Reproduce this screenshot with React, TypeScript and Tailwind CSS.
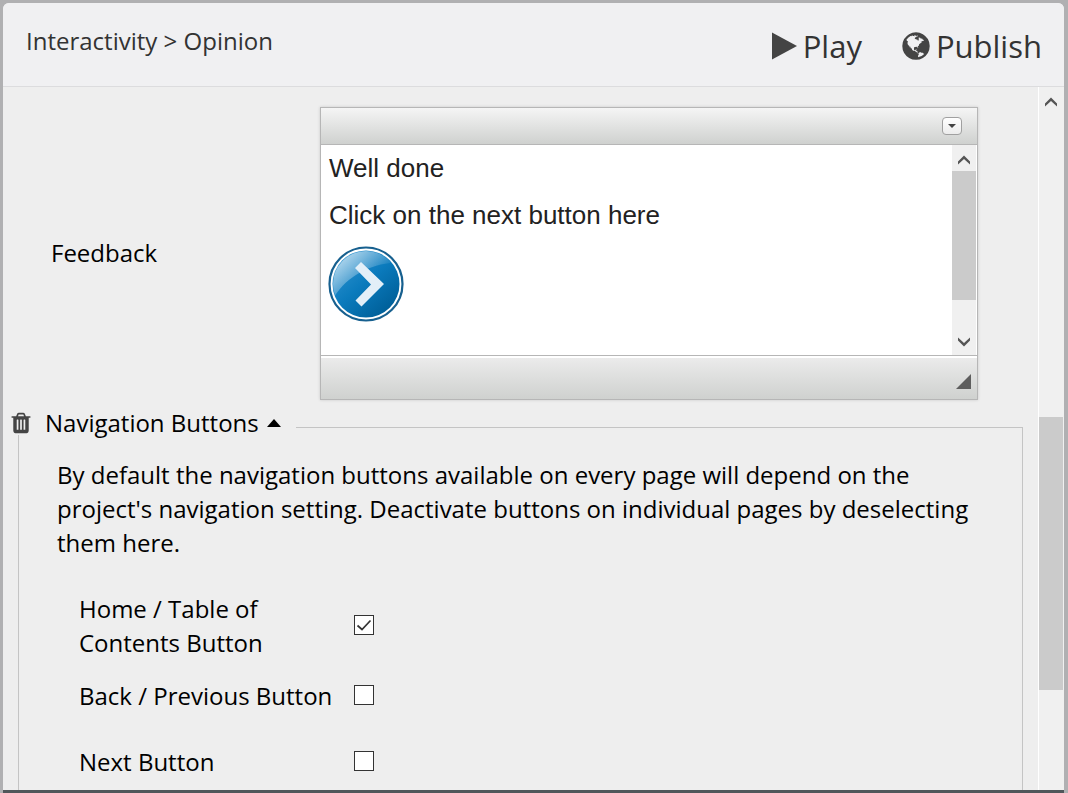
import { useState } from 'react';

const navigationButtons = [
  { id: 'home', label: 'Home / Table of Contents Button', checked: true },
  { id: 'back', label: 'Back / Previous Button', checked: false },
  { id: 'next', label: 'Next Button', checked: false },
];

function GlobeIcon() {
  return (
    <svg viewBox="0 0 1792 1792" className="w-8 h-8 -mx-0.5 fill-[#444]" aria-hidden="true">
      <path d="M896 128q209 0 385.500 103t279.500 279.500 103 385.500-103 385.500-279.500 279.500-385.500 103-385.500-103-279.500-279.500-103-385.500 103-385.500 279.500-279.500 385.500-103zm274 521q-2 1-9.500 9.500t-13.500 9.500q2 0 4.500-5t5-11 3.500-7q6-7 22-15 14-6 52-12 34-8 51 11-2-2 9.500-13t14.500-12q3-2 15-4.500t15-7.500l2-22q-12 1-17.500-7t-6.500-21q0 2-6 8 0-7-4.500-8t-11.500 1-9 1q-10-3-15-7.500t-8-16.500-4-15q-2-5-9.500-11t-9.500-10q-1-2-2.500-5.500t-3-6.500-4-5.500-5.500-2.500-7 5-7.500 10-4.500 5q-3-2-6-1.500t-4.500 1-4.500 3-5 3.500q-3 2-8.500 3t-8.500 2q15-5-1-11-10-4-16-3 9-4 7.500-12t-8.500-14h5q-1-4-8.500-8.500t-17.500-8.500-13-6q-8-5-34-9.500t-33-.5q-5 6-4.500 10.500t4 14 3.500 12.500q1 6-5.500 13t-6.500 12q0 7 14 15.500t10 21.500q-3 8-16 16t-16 12q-5 8-1.500 18.500t10.500 16.500q2 2 1.500 4t-3.500 4.500-5.500 4-6.500 3.500l-3 2q-11 5-20.500-6t-13.500-26q-7-25-16-30-23-8-29 1-5-13-41-26-25-9-58-4 6-1 0-15-7-15-19-12 3-6 4-17.500t1-13.500q3-13 12-23 1-1 7-8.500t9.500-13.500.5-6q35 4 50-11 5-5 11.500-17t10.500-17q9-6 14-5.500t14.500 5.500 14.500 5q14 1 15.500-11t-7.500-20q12 1 3-17-4-7-8-9-12-4-27 5-8 4 2 8-1-1-9.500 10.500t-16.500 17.500-16-5q-1-1-5.500-13.500t-9.500-13.500q-8 0-16 15 3-8-11-15t-24-8q19-12-8-27-7-4-20.500-5t-19.500 4q-5 7-5.500 11.500t5 8 10.500 5.500 11.500 4 8.500 3q14 10 8 14-2 1-8.500 3.500t-11.500 4.500-6 4q-3 4 0 14t-2 14q-5-5-9-17.500t-7-16.500q7 9-25 6l-10-1q-4 0-16 2t-20.500 1-13.500-8q-4-8 0-20 1-4 4-2-4-3-11-9.500t-10-8.500q-46 15-94 41 6 1 12-1 5-2 13-6.500t10-5.500q34-14 42-7l5-5q14 16 20 25-7-4-30-1-20 6-22 12 7 12 5 18-4-3-11.500-10t-14.500-11-15-5q-16 0-22 1-146 80-235 222 7 7 12 8 4 1 5 9t2.500 11 11.500-3q9 8 3 19 1-1 44 27 19 17 21 21 3 11-10 18-1-2-9-9t-9-4q-3 5 .5 18.500t10.500 12.500q-7 0-9.500 16t-2.500 35.500-1 23.500l2 1q-3 12 5.500 34.500t21.500 19.500q-13 3 20 43 6 8 8 9 3 2 12 7.500t15 10 10 10.500q4 5 10 22.500t14 23.500q-2 6 9.500 20t10.500 23q-1 0-2.500 1t-2.500 1q3 7 15.500 14t15.500 13q1 3 2 10t3 11 8 2q2-20-24-62-15-25-17-29-3-5-5.500-15.500t-4.500-14.500q2 0 6 1.500t8.500 3.500 7.500 4 2 3q-3 7 2 17.500t12 18.500 17 19 12 13q6 6 14 19.500t0 13.500q9 0 20 10.500t17 19.500q5 8 8 26t5 24q2 7 8.500 13.500t12.500 9.500l16 8 13 7q5 2 18.500 10.500t21.500 11.500q10 4 16 4t14.500-2.500 13.500-3.500q15-2 29 15t21 21q36 19 55 11-2 1 .5 7.500t8 15.500 9 14.500 5.500 8.500q5 6 18 15t18 15q6-4 7-9-3 8 7 20t18 10q14-3 14-32-31 15-49-18 0-1-2.500-5.500t-4-8.500-2.500-8.500 0-7.500 5-3q9 0 10-3.500t-2-12.500-4-13q-1-8-11-20t-12-15q-5 9-16 8t-16-9q0 1-1.500 5.500t-1.500 6.500q-13 0-15-1 1-3 2.500-17.500t3.500-22.500q1-4 5.500-12t7.500-14.500 4-12.500-4.500-9.500-17.500-2.500q-19 1-26 20-1 3-3 10.500t-5 11.500-9 7q-7 3-24 2t-24-5q-13-8-22.500-29t-9.500-37q0-10 2.500-26.500t3-25-5.500-24.500q3-2 9-9.500t10-10.500q2-1 4.500-1.500t4.500 0 4-1.500 3-6q-1-1-4-3-3-3-4-3 7 3 28.500-1.500t27.500 1.500q15 11 22-2 0-1-2.500-9.500t-.5-13.500q5 27 29 9 3 3 15.500 5t17.500 5q3 2 7 5.500t5.500 4.500 5-.5 8.500-6.500q10 14 12 24 11 40 19 44 7 3 11 2t4.500-9.500 0-14-1.500-12.500l-1-8v-18l-1-8q-15-3-18.500-12t1.500-18.500 15-18.500q1-1 8-3.500t15.500-6.500 12.500-8q21-19 15-35 7 0 11-9-1 0-5-3t-7.500-5-4.500-2q9-5 2-16 5-3 7.500-11t7.500-10q9 12 21 2 8-8 1-16 5-7 20.500-10.500t18.500-9.500q7 2 8-2t1-12 3-12q4-5 15-9t13-5l17-11q3-4 0-4 18 2 31-11 10-11-6-20 3-6-3-9.500t-15-5.500q3-1 11.500-.5t10.500-1.500q15-10-7-16-17-5-43 12zm-163 877q206-36 351-189-3-3-12.500-4.500t-12.500-3.500q-18-7-24-8 1-7-2.500-13t-8-9-12.500-8-11-7q-2-2-7-6t-7-5.500-7.500-4.500-8.500-2-10 1l-3 1q-3 1-5.500 2.500t-5.500 3-4 3 0 2.500q-21-17-36-22-5-1-11-5.500t-10.500-7-10-1.500-11.500 7q-5 5-6 15t-2 13q-7-5 0-17.500t2-18.500q-3-6-10.500-4.500t-12 4.500-11.500 8.500-9 6.500-8.500 5.500-8.500 7.500q-3 4-6 12t-5 11q-2-4-11.500-6.500t-9.500-5.500q2 10 4 35t5 38q7 31-12 48-27 25-29 40-4 22 12 26 0 7-8 20.500t-7 21.500q0 6 2 16z" />
    </svg>
  );
}

function TrashIcon() {
  return (
    <svg viewBox="0 0 1792 1792" className="w-6 h-6 fill-[#444]" aria-hidden="true">
      <path d="M704 1376v-704q0-14-9-23t-23-9h-64q-14 0-23 9t-9 23v704q0 14 9 23t23 9h64q14 0 23-9t9-23zm256 0v-704q0-14-9-23t-23-9h-64q-14 0-23 9t-9 23v704q0 14 9 23t23 9h64q14 0 23-9t9-23zm256 0v-704q0-14-9-23t-23-9h-64q-14 0-23 9t-9 23v704q0 14 9 23t23 9h64q14 0 23-9t9-23zm-544-992h448l-48-117q-7-9-17-11h-317q-10 2-17 11zm928 32v64q0 14-9 23t-23 9h-96v948q0 83-47 143.500t-113 60.500h-832q-66 0-113-58.500t-47-141.500v-952h-96q-14 0-23-9t-9-23v-64q0-14 9-23t23-9h309l70-167q15-37 54-63t79-26h320q40 0 79 26t54 63l70 167h309q14 0 23 9t9 23z" />
    </svg>
  );
}

function Chevron({ down = false }: { down?: boolean }) {
  return (
    <svg viewBox="0 0 12 10" className="w-3 h-2.5" aria-hidden="true">
      <path
        d={down ? 'M6 9.500 L0 3.500 V0.500 L6 6 L12 0.500 V3.500 Z' : 'M6 0.500 L12 6.500 V9.500 L6 4 L0 9.500 V6.500 Z'}
        fill="#555"
      />
    </svg>
  );
}

function NextGraphic() {
  return (
    <svg viewBox="0 0 76 76" className="w-[76px] h-[76px]" role="img" aria-label="Next">
      <defs>
        <linearGradient id="disc" x1="0.1" y1="0.1" x2="0.8" y2="0.9">
          <stop offset="0" stopColor="#2f93cf" />
          <stop offset="0.5" stopColor="#0b7bbd" />
          <stop offset="1" stopColor="#00609a" />
        </linearGradient>
        <linearGradient id="gloss" x1="0.1" y1="0.2" x2="0.65" y2="0.75">
          <stop offset="0" stopColor="#fff" stopOpacity="0.7" />
          <stop offset="1" stopColor="#fff" stopOpacity="0.02" />
        </linearGradient>
        <clipPath id="discClip">
          <circle cx="38" cy="38" r="33" />
        </clipPath>
      </defs>
      <circle cx="38" cy="38" r="36.500" fill="#fff" stroke="#17608f" strokeWidth="2.200" />
      <circle cx="38" cy="38" r="33.500" fill="url(#disc)" />
      <path
        d="M4 55 C14 35 36 20 62 17 L62 0 L0 0 Z"
        fill="url(#gloss)"
        clipPath="url(#discClip)"
      />
      <path d="M33 16 L56 38 L33.500 60.500 L27.500 54.500 L43 38.500 L27 22 Z" fill="#e3eff8" />
    </svg>
  );
}

function Editor() {
  return (
    <div className="flex-1 border border-[#b6b6b6] shadow-[0_0_3px_rgba(0,0,0,0.15)] bg-white">
      <div className="h-[37px] flex items-center justify-end pr-[15px] border-b border-[#b6b6b6] bg-linear-to-b from-[#f5f5f5] to-[#cfd1cf]">
        <button
          type="button"
          aria-label="Expand toolbar"
          className="w-5 h-[18px] flex items-center justify-center rounded-[4px] border border-[#a0a0a0] bg-linear-to-b from-white to-[#ececec]"
        >
          <svg viewBox="0 0 8 4" className="w-2 h-1" aria-hidden="true">
            <path d="M0 0 H8 L4 4 Z" fill="#444" />
          </svg>
        </button>
      </div>

      <div className="h-[210px] flex">
        <div className="flex-1 px-2 pt-1 font-['Liberation_Sans',Arial,sans-serif] text-[26px] leading-[38px] text-[#222]">
          <p className="mb-[9px]">Well done</p>
          <p className="mb-3">Click on the next button here</p>
          <div className="-ml-px">
            <NextGraphic />
          </div>
        </div>
        <div className="w-6 mr-px bg-[#f0f0f0] flex flex-col items-center">
          <div className="h-[26px] flex items-center pt-1">
            <Chevron />
          </div>
          <div className="w-full h-[129px] bg-[#cbcbcb]" />
          <div className="mt-auto h-[26px] flex items-center">
            <Chevron down />
          </div>
        </div>
      </div>

      <div className="h-[44px] border-t border-[#b6b6b6]">
        <div className="h-full flex items-end justify-end pb-2.5 pr-1.5 border-t-2 border-white bg-linear-to-b from-[#ebebeb] to-[#cfd1cf]">
          <svg viewBox="0 0 15 15" className="w-[15px] h-[15px]" aria-hidden="true">
            <path d="M15 0 V15 H0 Z" fill="#5e5e5e" />
          </svg>
        </div>
      </div>
    </div>
  );
}

function Checkbox({
  id,
  checked,
  onChange,
}: {
  id: string;
  checked: boolean;
  onChange: () => void;
}) {
  return (
    <span className="grid mb-0.5">
      <input
        id={id}
        type="checkbox"
        checked={checked}
        onChange={onChange}
        className="peer col-start-1 row-start-1 appearance-none w-5 h-5 border border-[#333] bg-white"
      />
      <svg
        viewBox="0 0 20 20"
        className="col-start-1 row-start-1 w-5 h-5 pointer-events-none invisible peer-checked:visible"
        aria-hidden="true"
      >
        <path d="M3.500 10.500 L8 14.500 L16.500 5.500" fill="none" stroke="#333" strokeWidth="1.700" />
      </svg>
    </span>
  );
}

export default function App() {
  const [buttons, setButtons] = useState(navigationButtons);

  const toggle = (id: string) =>
    setButtons(buttons.map((b) => (b.id === id ? { ...b, checked: !b.checked } : b)));

  return (
    <div className="h-screen flex flex-col bg-[#b0b0b2] pt-[3px] font-['Open_Sans','Noto_Sans',sans-serif] text-2xl leading-[34px] text-black">
      <div className="flex-1 min-h-0 flex flex-col ml-[3px] mr-1 rounded-t-md overflow-hidden bg-[#eee] border-b-3 border-[#50565a]">
        <header className="h-[84px] shrink-0 flex justify-between pl-[23px] pr-[22px] border-b border-[#dcdcde] bg-[#f0f0f2] text-[#333]">
          <h1 className="pt-[21px]">Interactivity &gt; Opinion</h1>
          <div className="flex items-center gap-10 pt-0.5 text-[31px] leading-10">
            <button type="button" className="flex items-center gap-1.5">
              <svg viewBox="0 0 25 28" className="w-[25px] h-7" aria-hidden="true">
                <path d="M0 0.500 L25 14 L0 27.500 Z" fill="#444" />
              </svg>
              Play
            </button>
            <button type="button" className="flex items-center gap-1.5">
              <GlobeIcon />
              Publish
            </button>
          </div>
        </header>

        <div className="flex-1 min-h-0 flex">
          <main className="flex-1 overflow-hidden">
            <div className="flex items-center pt-5 pl-12 pr-[60px]">
              <div className="w-[269px] pb-0.5">Feedback</div>
              <Editor />
            </div>

            <fieldset className="mt-[19px] mx-[15px] border border-[#c4c4c4] pb-10">
              {/* content is centred a little above the border line */}
              <legend className="-ml-[10px] h-4 pb-2 pr-[15px] flex items-center">
                <button type="button" aria-label="Delete navigation buttons" className="mr-3">
                  <TrashIcon />
                </button>
                <button type="button" className="flex items-center gap-2">
                  Navigation Buttons
                  <svg viewBox="0 0 14 8" className="w-3.5 h-2" aria-hidden="true">
                    <path d="M7 0 L14 8 H0 Z" fill="#000" />
                  </svg>
                </button>
              </legend>

              <p className="mt-[23px] mx-[38px]">
                By default the navigation buttons available on every page will depend on the
                project's navigation setting. Deactivate buttons on individual pages by
                deselecting them here.
              </p>

              <div className="mt-8 ml-[60px] flex flex-col gap-1.5">
                {buttons.map((b) => (
                  <div key={b.id} className="min-h-[60px] flex items-center">
                    <label htmlFor={b.id} className="w-[260px] mr-[15px]">
                      {b.label}
                    </label>
                    <Checkbox id={b.id} checked={b.checked} onChange={() => toggle(b.id)} />
                  </div>
                ))}
              </div>
            </fieldset>
          </main>

          {/* page scrollbar */}
          <div className="w-[26px] shrink-0 flex flex-col border-l border-white bg-[#f0f0f0] pr-px">
            <div className="h-[30px] flex items-center justify-center">
              <Chevron />
            </div>
            <div className="mt-[300px] h-[273px] bg-[#cbcbcb]" />
          </div>
        </div>
      </div>
    </div>
  );
}
